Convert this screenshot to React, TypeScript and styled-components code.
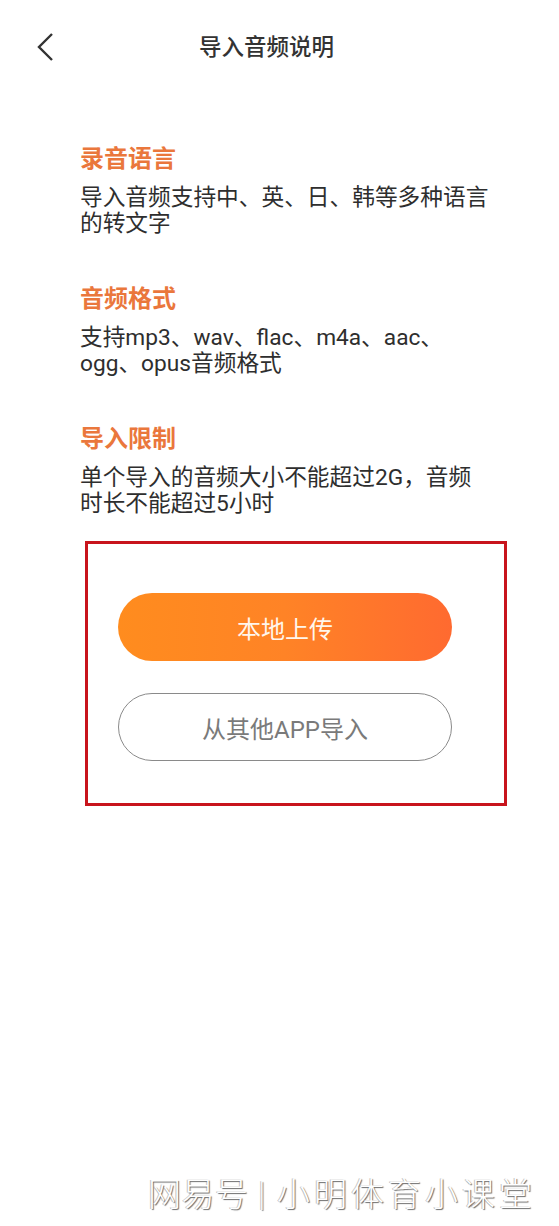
import React from "react";
import styled, { createGlobalStyle } from "styled-components";

const GlobalStyle = createGlobalStyle`
    html, body {
        margin: 0;
        padding: 0;
        background: #ffffff;
    }
    body {
        font-family: Roboto, "Noto Sans CJK SC", "Noto Sans", sans-serif;
        color: #333333;
    }
`;

const Page = styled.div`
    min-height: 1226px;
    display: flex;
    flex-direction: column;
    background: #ffffff;
`;

const Header = styled.div`
    height: 94px;
    display: flex;
    align-items: center;
    position: relative;
`;

const BackButton = styled.div`
    width: 40px;
    height: 94px;
    margin-left: 34px;
    display: flex;
    align-items: center;
`;

const Title = styled.div`
    position: absolute;
    left: 0;
    right: 0;
    top: 0;
    line-height: 94px;
    text-align: center;
    font-size: 22.5px;
    font-weight: 500;
    color: #333333;
    padding-right: 26px;
    pointer-events: none;
`;

const Content = styled.div`
    padding: 49px 40px 0 80px;
    display: flex;
    flex-direction: column;
    gap: 46px;
`;

const Section = styled.div`
    display: flex;
    flex-direction: column;
    gap: 10px;
`;

const Heading = styled.div`
    font-size: 24px;
    line-height: 32px;
    font-weight: 700;
    color: #ea773c;
`;

const Body = styled.div`
    font-size: 22.7px;
    line-height: 26px;
    color: #2e2e2e;
`;

const ActionBox = styled.div`
    margin: 24px 0 0 85px;
    width: 422px;
    height: 265px;
    box-sizing: border-box;
    border: 3px solid #c8141c;
    padding: 49px 0 0 30px;
    display: flex;
    flex-direction: column;
    gap: 32px;
`;

const Button = styled.div<{ $primary?: boolean }>`
    width: 334px;
    height: 68px;
    box-sizing: border-box;
    border-radius: 34px;
    display: flex;
    align-items: center;
    justify-content: center;
    font-size: 24px;
    color: ${(p) => (p.$primary ? "#fff6ec" : "#7a7a7a")};
    background: ${(p) =>
        p.$primary ? "linear-gradient(90deg, #ff8c1e 0%, #ff8326 50%, #ff6a30 100%)" : "#ffffff"};
    border: ${(p) => (p.$primary ? "none" : "1px solid #8a8a8a")};
`;

const Watermark = styled.div`
    margin-top: auto;
    padding: 0 0 14px 148px;
    font-family: "Noto Sans CJK SC", sans-serif;
    font-size: 33px;
    line-height: 40px;
    font-weight: 300;
    color: #ffffff;
    text-shadow: 1px 1px 1px #6a6a6a, -1px 0 0 #c4c4c4;
    white-space: nowrap;
    display: flex;
    align-items: center;
`;

const MarkPart = styled.span<{ $spacing: number }>`
    letter-spacing: ${(p) => p.$spacing}px;
`;

const Sep = styled.span`
    font-size: 26px;
    margin: 0 12px 0 10px;
`;

export default () => {
    return (
        <Page>
            <GlobalStyle />
            <Header>
                <BackButton>
                    <svg width="22" height="30" viewBox="0 0 22 30">
                        <path d="M18 2 L5 15 L18 28" fill="none" stroke="#333" strokeWidth="2.4" />
                    </svg>
                </BackButton>
                <Title>导入音频说明</Title>
            </Header>
            <Content>
                <Section>
                    <Heading>录音语言</Heading>
                    <Body>
                        导入音频支持中、英、日、韩等多种语言
                        <br />
                        的转文字
                    </Body>
                </Section>
                <Section>
                    <Heading>音频格式</Heading>
                    <Body>
                        支持mp3、wav、flac、m4a、aac、
                        <br />
                        ogg、opus音频格式
                    </Body>
                </Section>
                <Section>
                    <Heading>导入限制</Heading>
                    <Body>
                        单个导入的音频大小不能超过2G，音频
                        <br />
                        时长不能超过5小时
                    </Body>
                </Section>
            </Content>
            <ActionBox>
                <Button $primary>本地上传</Button>
                <Button>从其他APP导入</Button>
            </ActionBox>
            <Watermark>
                <MarkPart $spacing={0.5}>网易号</MarkPart>
                <Sep>|</Sep>
                <MarkPart $spacing={4}>小明体育小课堂</MarkPart>
            </Watermark>
        </Page>
    );
};
